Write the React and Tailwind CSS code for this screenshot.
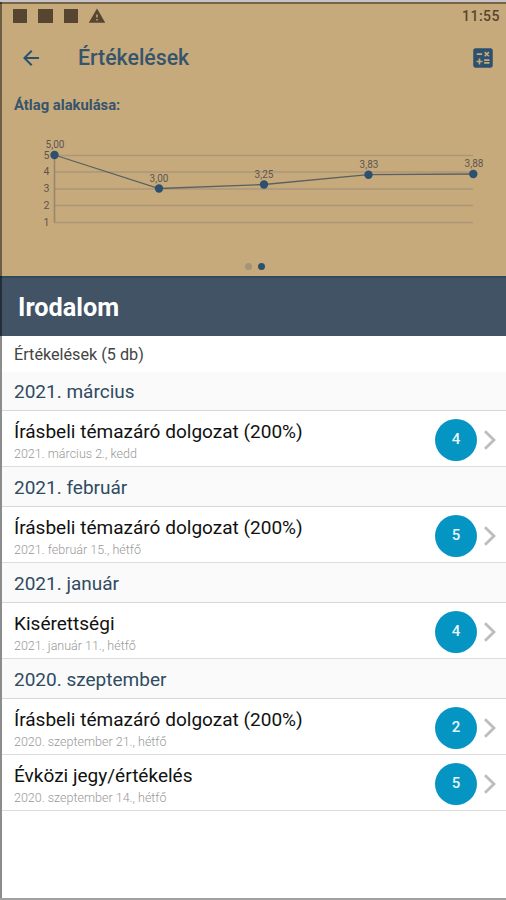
import { MdArrowBack, MdCalculate, MdWarning } from 'react-icons/md';

const chartPoints = [
  { x: 54.5, y: 155, label: '5,00', labelX: 55 },
  { x: 159, y: 188.5, label: '3,00', labelX: 159 },
  { x: 264, y: 184.5, label: '3,25', labelX: 264 },
  { x: 368.5, y: 174.7, label: '3,83', labelX: 369 },
  { x: 473.3, y: 174, label: '3,88', labelX: 474 },
];

const gridLines = [
  { value: 5, y: 155.5 },
  { value: 4, y: 172 },
  { value: 3, y: 189 },
  { value: 2, y: 205.5 },
  { value: 1, y: 222.5 },
];

const months = [
  {
    name: '2021. március',
    grades: [{ title: 'Írásbeli témazáró dolgozat (200%)', date: '2021. március 2., kedd', value: 4 }],
  },
  {
    name: '2021. február',
    grades: [{ title: 'Írásbeli témazáró dolgozat (200%)', date: '2021. február 15., hétfő', value: 5 }],
  },
  {
    name: '2021. január',
    grades: [{ title: 'Kisérettségi', date: '2021. január 11., hétfő', value: 4 }],
  },
  {
    name: '2020. szeptember',
    grades: [
      { title: 'Írásbeli témazáró dolgozat (200%)', date: '2020. szeptember 21., hétfő', value: 2 },
      { title: 'Évközi jegy/értékelés', date: '2020. szeptember 14., hétfő', value: 5 },
    ],
  },
];

function StatusBar() {
  return (
    <div className="flex h-[27px] items-center justify-between pl-[11px] pr-[6px] text-[#564530]">
      <div className="flex items-center gap-[11px] pb-[2px]">
        <div className="h-[14px] w-[14px] bg-[#564530]" />
        <div className="h-[14px] w-[15px] bg-[#564530]" />
        <div className="h-[14px] w-[14px] bg-[#564530]" />
        <MdWarning className="-ml-[1px] h-[18px] w-[18px]" />
      </div>
      <span className="text-[14px] font-medium tracking-[0.5px]">11:55</span>
    </div>
  );
}

function AverageChart() {
  return (
    <svg className="block h-[120px] w-full" viewBox="0 130 506 120">
      {gridLines.map((line) => (
        <g key={line.value}>
          <line x1="54" x2="473" y1={line.y} y2={line.y} stroke="#ab967a" strokeWidth="1.3" />
          <text x="46.5" y={line.y + 3.2} textAnchor="middle" fontSize="10.5" fill="#5b5750">
            {line.value}
          </text>
        </g>
      ))}
      <line x1="54.5" x2="54.5" y1="155" y2="222.5" stroke="#96876f" strokeWidth="1.6" />
      <polyline
        points={chartPoints.map((p) => `${p.x},${p.y}`).join(' ')}
        fill="none"
        stroke="#5c6062"
        strokeWidth="1.3"
      />
      {chartPoints.map((p) => (
        <g key={p.label}>
          <circle cx={p.x} cy={p.y} r="4.2" fill="#2c506e" />
          <text x={p.labelX} y={p.y - 6.8} textAnchor="middle" fontSize="10" fill="#5b5750">
            {p.label}
          </text>
        </g>
      ))}
    </svg>
  );
}

function GradeRow({ grade }) {
  return (
    <div className="flex h-14 items-center border-b border-[#dcdcdc] pl-3 pr-[9px] pt-[2px]">
      <div className="flex-1 pt-[3px]">
        <div className="text-[19.05px] leading-6 text-[#111]">{grade.title}</div>
        <div className="pt-px text-[12.5px] font-light leading-[18px] text-[#999]">{grade.date}</div>
      </div>
      <div className="flex h-[42px] w-[42px] items-center justify-center rounded-full bg-[#0595c3] text-[15px] font-medium text-[#e6f5fa]">
        {grade.value}
      </div>
      <svg className="ml-[6px] h-5 w-[14px]" viewBox="0 0 14 20" fill="none" stroke="#bdbdbd" strokeWidth="2.8">
        <path d="M2 1.2 L11 10 L2 18.8" />
      </svg>
    </div>
  );
}

export default function App() {
  return (
    <div className="flex h-[900px] w-[506px] flex-col overflow-hidden bg-white font-['Roboto',sans-serif]">
      <div className="h-[2px] bg-[#c4c4ca]" />
      <div className="relative flex flex-1 flex-col border-b-2 border-[#a0a0a0] pl-[2px]">
        <div className="absolute inset-y-0 left-0 z-10 w-[2px] bg-black/45" />

        <div className="-ml-[2px] h-[274px] border-t-2 border-[#7a6341] bg-[#c7aa7c] pl-[2px]">
          <div className="-mt-[1px]">
            <StatusBar />
          </div>
          <div className="flex h-[56px] items-center pl-[17px] pr-[10px] text-[#2c506e]">
            <MdArrowBack className="h-6 w-6" />
            <h1 className="ml-[35px] flex-1 text-[21.3px] font-medium text-[#36546b]">Értékelések</h1>
            <MdCalculate className="h-[26px] w-[26px]" />
          </div>
          <div className="h-[44px] pl-3 pt-[9px] text-[14.8px] font-bold leading-5 text-[#36546b]">Átlag alakulása:</div>
          <div className="-ml-[2px]">
            <AverageChart />
          </div>
          <div className="flex justify-center gap-[6px] pl-[2px] pt-[13px]">
            <div className="h-[7px] w-[7px] rounded-full bg-[#a39478]" />
            <div className="h-[7px] w-[7px] rounded-full bg-[#2c506e]" />
          </div>
        </div>

        <div className="-ml-[2px] flex h-[60px] items-center border-t-2 border-[#2d4a5e] bg-[#415364] pl-[18px] pt-[2px]">
          <h2 className="text-[25.3px] font-bold text-white">Irodalom</h2>
        </div>

        <div className="h-9 pl-3 text-[16.2px] leading-[37px] text-[#444]">Értékelések (5 db)</div>

        {months.map((month, i) => (
          <div key={month.name}>
            <div
              className={`flex items-center border-b border-[#d8d8d8] bg-[#fafafa] pl-3 text-[19px] text-[#2f4b62] ${
                i === 0 ? 'h-[39px] pt-[2px]' : 'h-10 pt-[3px]'
              }`}
            >
              {month.name}
            </div>
            {month.grades.map((grade) => (
              <GradeRow key={grade.date} grade={grade} />
            ))}
          </div>
        ))}
      </div>
    </div>
  );
}
